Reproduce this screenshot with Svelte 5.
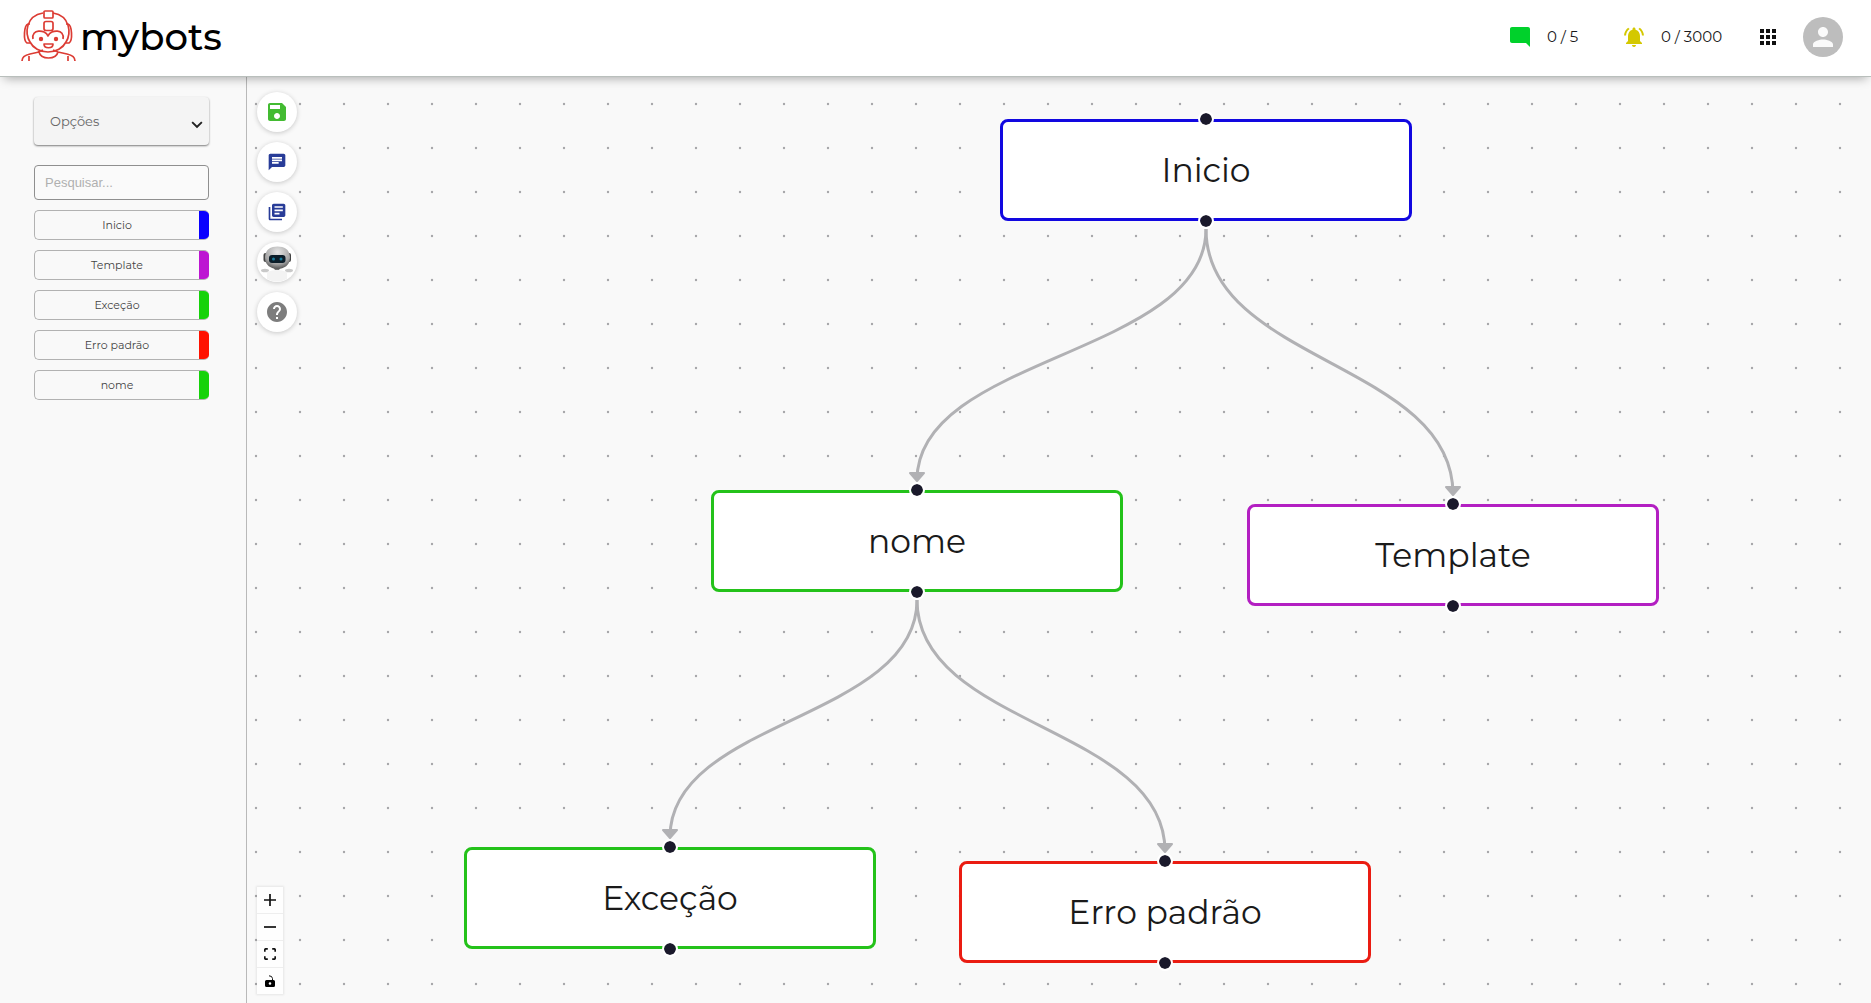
<script>
  const W = 412;
  const H = 102;
  const nodes = [
    { id: 'inicio', label: 'Inicio', x: 753, y: 42, color: '#1208e0' },
    { id: 'nome', label: 'nome', x: 464, y: 413, color: '#24c21a' },
    { id: 'template', label: 'Template', x: 1000, y: 427, color: '#b31fc2' },
    { id: 'excecao', label: 'Exceção', x: 217, y: 770, color: '#24c21a' },
    { id: 'erro', label: 'Erro padrão', x: 712, y: 784, color: '#ea1c12' }
  ];
  const links = [
    ['inicio', 'nome'],
    ['inicio', 'template'],
    ['nome', 'excecao'],
    ['nome', 'erro']
  ];
  const byId = Object.fromEntries(nodes.map((n) => [n.id, n]));
  const edges = links.map(([a, b]) => {
    const sx = byId[a].x + W / 2;
    const sy = byId[a].y + H + 8;
    const tx = byId[b].x + W / 2;
    const ty = byId[b].y - 8;
    const my = (sy + ty) / 2;
    return {
      line: `M${sx},${sy} C${sx},${my} ${tx},${my} ${tx},${ty - 2}`,
      head: `M${tx - 7},${ty - 9} L${tx + 7},${ty - 9} L${tx},${ty - 1} Z`
    };
  });
  const items = [
    { label: 'Inicio', color: '#0a00ff' },
    { label: 'Template', color: '#bd16d2' },
    { label: 'Exceção', color: '#16d20a' },
    { label: 'Erro padrão', color: '#ff1200' },
    { label: 'nome', color: '#16d20a' }
  ];
  let search = $state('');
</script>

<div class="app">
  <header>
    <a class="brand" href="#home" aria-label="mybots">
      <svg class="mascot" viewBox="0 0 56 52" aria-hidden="true">
        <g fill="none" stroke="#dc3c34" stroke-width="1.700" stroke-linejoin="round">
          <path d="M23 3C5 6 5 24 10 32c3 6 10 10 18 10s15-4 18-10c5-8 5-26-13-29" />
          <rect x="24" y="1" width="9" height="7" rx="1" />
          <rect x="24" y="11.500" width="9" height="9" rx="2" />
          <path d="M10 14H8c-4 1-5 17-1 19h3M46 14h2c4 1 5 17 1 19h-3M13 29C11 19 25 19 28 26c3-7 17-7 15 3" />
          <path d="M24 34h9c0 5-9 5-9 0Z" />
          <path d="M2 51c0-4 3-6 8-7l9-2c2 8 17 8 19 0l9 2c5 1 8 3 8 7M18 42l5-2M38 42l-5-2M9 46v5M48 46v5" />
        </g>
        <circle cx="21" cy="29" r="2.200" fill="#dc3c34" />
        <circle cx="36" cy="29" r="2.200" fill="#dc3c34" />
      </svg>
      <span class="wordmark">mybots</span>
    </a>
    <div class="status">
      <svg class="i24" viewBox="0 0 24 24" fill="#00d12b" aria-hidden="true"><path d="M21.990 4c0-1.100-.890-2-1.990-2H4c-1.100 0-2 .900-2 2v12c0 1.100.900 2 2 2h14l4 4-.010-18z" /></svg>
      <span class="count first">0 / 5</span>
      <svg class="i24" viewBox="0 0 24 24" fill="#d4c800" aria-hidden="true"><path d="M7.580 4.080 6.150 2.650C3.750 4.480 2.170 7.300 2.030 10.500h2c.150-2.650 1.510-4.970 3.550-6.420zm12.390 6.420h2c-.150-3.200-1.730-6.020-4.120-7.850l-1.420 1.430c2.020 1.450 3.390 3.770 3.540 6.420zM18 11c0-3.070-1.640-5.640-4.500-6.320V4c0-.830-.670-1.500-1.500-1.500s-1.500.670-1.500 1.500v.680C7.630 5.360 6 7.920 6 11v5l-2 2v1h16v-1l-2-2v-5zm-6 11c.140 0 .270-.010.400-.040.650-.140 1.180-.580 1.440-1.180.100-.240.150-.500.150-.780h-4c.010 1.100.900 2 2.010 2z" /></svg>
      <span class="count">0 / 3000</span>
      <button class="plain" aria-label="Aplicativos">
        <svg class="i24" viewBox="0 0 24 24" fill="#111"><path d="M4 8h4V4H4v4zm6 12h4v-4h-4v4zm-6 0h4v-4H4v4zm0-6h4v-4H4v4zm6 0h4v-4h-4v4zm6-10v4h4V4h-4zm-6 4h4V4h-4v4zm6 6h4v-4h-4v4zm0 6h4v-4h-4v4z" /></svg>
      </button>
      <button class="avatar" aria-label="Conta">
        <svg class="i30" viewBox="0 0 24 24" fill="#fafafa"><path d="M12 12c2.210 0 4-1.790 4-4s-1.790-4-4-4-4 1.790-4 4 1.790 4 4 4zm0 2c-2.670 0-8 1.340-8 4v2h16v-2c0-2.660-5.330-4-8-4z" /></svg>
      </button>
    </div>
  </header>

  <div class="body">
    <aside>
      <button class="options">
        <span>Opções</span>
        <svg viewBox="0 0 24 24" fill="#222" aria-hidden="true"><path d="M7.410 8.090 12 12.670l4.590-4.580L18 9.500l-6 6-6-6z" /></svg>
      </button>
      <input type="text" placeholder="Pesquisar..." aria-label="Pesquisar" bind:value={search} />
      <div class="list">
        {#each items as item}
          <button class="item">
            <span class="name">{item.label}</span>
            <span class="swatch" style:background={item.color}></span>
          </button>
        {/each}
      </div>
    </aside>

    <main>
      <svg class="flow" aria-hidden="true">
        <defs>
          <pattern id="dots" x="-13" y="5" width="44" height="44" patternUnits="userSpaceOnUse">
            <circle cx="22" cy="22" r="1.200" fill="#a6a6a9" />
          </pattern>
        </defs>
        <rect width="100%" height="100%" fill="url(#dots)" />
        {#each edges as edge}
          <path class="line" d={edge.line} />
          <path class="head" d={edge.head} />
        {/each}
      </svg>

      {#each nodes as node}
        <div class="node" style:left="{node.x}px" style:top="{node.y}px" style:border-color={node.color}>
          <i class="port top"></i>
          {node.label}
          <i class="port bottom"></i>
        </div>
      {/each}

      <nav class="tools" aria-label="Ferramentas">
        <button aria-label="Salvar">
          <svg class="i24" viewBox="0 0 24 24" fill="#43bb32"><path d="M17 3H5c-1.110 0-2 .900-2 2v14c0 1.100.890 2 2 2h14c1.100 0 2-.900 2-2V7l-4-4zm-5 16c-1.660 0-3-1.340-3-3s1.340-3 3-3 3 1.340 3 3-1.340 3-3 3zm3-10H5V5h10v4z" /></svg>
        </button>
        <button aria-label="Mensagem">
          <svg class="i20" viewBox="0 0 24 24" fill="#283c98"><path d="M20 2H4c-1.100 0-1.990.900-1.990 2L2 22l4-4h14c1.100 0 2-.900 2-2V4c0-1.100-.900-2-2-2zM6 9h12v2H6V9zm8 5H6v-2h8v2zm4-6H6V6h12v2z" /></svg>
        </button>
        <button aria-label="Biblioteca">
          <svg class="i20" viewBox="0 0 24 24" fill="#283c98"><path d="M4 6H2v14c0 1.100.900 2 2 2h14v-2H4V6zm16-4H8c-1.100 0-2 .900-2 2v12c0 1.100.900 2 2 2h12c1.100 0 2-.900 2-2V4c0-1.100-.900-2-2-2zm-1 9H9V9h10v2zm-4 4H9v-2h6v2zm4-8H9V5h10v2z" /></svg>
        </button>
        <button aria-label="Robô">
          <svg class="i40" viewBox="0 0 40 40">
            <defs>
              <radialGradient id="skull" cx=".5" cy=".25" r=".75">
                <stop offset="0" stop-color="#e6e6e6" />
                <stop offset=".7" stop-color="#a4a4a4" />
                <stop offset="1" stop-color="#555" />
              </radialGradient>
            </defs>
            <ellipse cx="8" cy="28.500" rx="4" ry="1.800" fill="#c9c9c9" />
            <ellipse cx="32" cy="28.500" rx="4" ry="1.800" fill="#c9c9c9" />
            <path d="M10 30q10-4 20 0v7q-10 5-20 0Z" fill="#f3f3f3" />
            <path d="M16 25h8l-2 3h-4Z" fill="#777" />
            <rect x="6.500" y="11" width="4" height="9" rx="2" fill="#444" />
            <rect x="30" y="11" width="4" height="9" rx="2" fill="#444" />
            <path d="M8 16C8 8 13 4.500 20.500 4.500S33 8 33 16c0 7-6 11-12.500 11S8 23 8 16Z" fill="url(#skull)" />
            <rect x="12" y="13" width="16.500" height="8" rx="3" fill="#0b1d29" />
            <circle cx="16.500" cy="17" r="1.500" fill="#197b9b" />
            <circle cx="24" cy="17" r="1.500" fill="#197b9b" />
          </svg>
        </button>
        <button aria-label="Ajuda">
          <svg class="i24" viewBox="0 0 24 24" fill="#7d7d7d"><path d="M12 2C6.480 2 2 6.480 2 12s4.480 10 10 10 10-4.480 10-10S17.520 2 12 2zm1 17h-2v-2h2v2zm2.070-7.750-.900.920C13.450 12.900 13 13.500 13 15h-2v-.500c0-1.100.450-2.100 1.170-2.830l1.240-1.260c.370-.360.590-.860.590-1.410 0-1.100-.900-2-2-2s-2 .900-2 2H8c0-2.210 1.790-4 4-4s4 1.790 4 4c0 .880-.360 1.680-.930 2.250z" /></svg>
        </button>
      </nav>

      <div class="controls">
        <button aria-label="Aumentar zoom"><svg viewBox="0 0 12 12"><path d="M6 0v12M0 6h12" /></svg></button>
        <button aria-label="Diminuir zoom"><svg viewBox="0 0 12 12"><path d="M0 6h12" /></svg></button>
        <button aria-label="Ajustar à tela"><svg viewBox="0 0 12 12"><path d="M.8 3.800V2Q.8.8 2 .8h1.800M8.200.8H10q1.200 0 1.200 1.200v1.800M11.200 8.200V10q0 1.200-1.200 1.200H8.200M3.800 11.200H2Q.8 11.200.8 10V8.200" /></svg></button>
        <button aria-label="Bloquear"><svg viewBox="0 0 12 12"><path class="solid" fill-rule="evenodd" d="M2.500 5h7Q11 5 11 6.500v4Q11 12 9.500 12h-7Q1 12 1 10.500v-4Q1 5 2.500 5ZM6 7.200a1.300 1.300 0 1 0 0 2.600 1.300 1.300 0 0 0 0-2.600Z" /><path class="thin" d="M8.500 5V3.500Q8.300.8 5 .8" /></svg></button>
      </div>
    </main>
  </div>
</div>

<style>
  :global(body) {
    margin: 0;
    background: #f9f9f9;
  }
  .app {
    display: flex;
    flex-direction: column;
    min-height: 100vh;
    font-family: Montserrat, Inter, 'Open Sans', sans-serif;
    color: #1a1a1a;
  }
  button {
    font: inherit;
    color: inherit;
    border: 0;
    padding: 0;
    background: none;
    cursor: pointer;
  }
  svg {
    display: block;
    flex: none;
  }
  header {
    box-sizing: border-box;
    height: 77px;
    display: flex;
    align-items: center;
    justify-content: space-between;
    padding: 0 28px 3px 20px;
    background: #fff;
    border-bottom: 1px solid #b9bfbc;
    box-shadow: 0 5px 10px -4px rgba(0, 0, 0, 0.35);
    position: relative;
    z-index: 2;
  }
  .brand {
    display: flex;
    align-items: center;
    gap: 4px;
    padding-bottom: 2px;
    color: #000;
    text-decoration: none;
    font-size: 37px;
    font-weight: 500;
    line-height: 48px;
  }
  .mascot {
    width: 56px;
    height: 52px;
  }
  .wordmark {
    padding-top: 3px;
  }
  .status {
    display: flex;
    align-items: center;
    font-size: 15px;
  }
  .i20 {
    width: 20px;
    height: 20px;
  }
  .i24 {
    width: 24px;
    height: 24px;
  }
  .i30 {
    width: 30px;
    height: 30px;
  }
  .i40 {
    width: 40px;
    height: 40px;
  }
  .count {
    margin-left: 15px;
    width: 95px;
  }
  .first {
    width: 75px;
  }
  .avatar {
    width: 40px;
    height: 40px;
    margin-left: 23px;
    display: grid;
    place-items: center;
    border-radius: 50%;
    background: #bdbdbd;
  }
  .body {
    flex: 1;
    display: flex;
  }
  aside {
    box-sizing: border-box;
    width: 247px;
    flex: none;
    padding: 20px 37px 0 34px;
    border-right: 1px solid #b9b9b9;
    display: flex;
    flex-direction: column;
  }
  .options {
    height: 48px;
    display: flex;
    align-items: center;
    justify-content: space-between;
    padding: 0 1px 0 16px;
    border-radius: 4px;
    background: #f4f4f4;
    box-shadow: 0 1px 2px rgba(0, 0, 0, 0.5);
    font-size: 13px;
    color: #666;
  }
  .options svg {
    width: 22px;
    height: 22px;
    margin-top: 8px;
  }
  input {
    box-sizing: border-box;
    width: 100%;
    height: 35px;
    margin: 20px 0 10px;
    padding: 0 10px;
    border: 1px solid #8f8f8f;
    border-radius: 4px;
    background: #fafafa;
    font-family: 'Liberation Sans', sans-serif;
    font-size: 13px;
  }
  input::placeholder {
    color: #b0b0b0;
    opacity: 1;
  }
  .list {
    display: flex;
    flex-direction: column;
    gap: 10px;
  }
  .item {
    height: 30px;
    display: flex;
    align-items: stretch;
    overflow: hidden;
    border: 1px solid #b2b2b2;
    border-right: 0;
    border-radius: 5px;
    font-size: 11px;
    line-height: 28px;
    color: #444;
  }
  .name {
    flex: 1;
  }
  .swatch {
    width: 10px;
  }
  main {
    flex: 1;
    min-width: 0;
    position: relative;
    overflow: hidden;
    display: flex;
    flex-direction: column;
    justify-content: space-between;
    align-items: flex-start;
    padding: 15px 10px 9px;
    background: #f9f9f9;
  }
  .flow {
    position: absolute;
    inset: 0;
    width: 100%;
    height: 100%;
  }
  .line {
    fill: none;
    stroke: #b1b1b4;
    stroke-width: 3;
  }
  .head {
    fill: #b1b1b4;
    stroke: #b1b1b4;
    stroke-width: 2;
    stroke-linejoin: round;
  }
  .node {
    position: absolute;
    box-sizing: border-box;
    width: 412px;
    height: 102px;
    display: flex;
    align-items: center;
    justify-content: center;
    border: 3px solid;
    border-radius: 8px;
    background: #fff;
    font-size: 33px;
  }
  .port {
    position: absolute;
    left: 50%;
    box-sizing: border-box;
    width: 16px;
    height: 16px;
    margin: -8px;
    border: 2px solid #fff;
    border-radius: 50%;
    background: #1a192b;
    background-clip: padding-box;
  }
  .top {
    top: -3px;
  }
  .bottom {
    bottom: -3px;
  }
  .tools {
    position: relative;
    display: flex;
    flex-direction: column;
    gap: 10px;
  }
  .tools button {
    width: 40px;
    height: 40px;
    display: grid;
    place-items: center;
    overflow: hidden;
    border-radius: 50%;
    background: #fff;
    box-shadow: 0 1px 5px rgba(0, 0, 0, 0.2);
  }
  .controls {
    position: relative;
    display: flex;
    flex-direction: column;
    gap: 1px;
    background: #eee;
    box-shadow: 0 0 2px 1px rgba(0, 0, 0, 0.08);
  }
  .controls button {
    width: 26px;
    height: 26px;
    display: grid;
    place-items: center;
    background: #fefefe;
  }
  .controls svg {
    width: 12px;
    height: 12px;
    fill: none;
    stroke: #111;
    stroke-width: 1.700;
  }
  .controls .solid {
    fill: #000;
    stroke: none;
  }
  .controls .thin {
    stroke-width: 1;
  }
</style>
